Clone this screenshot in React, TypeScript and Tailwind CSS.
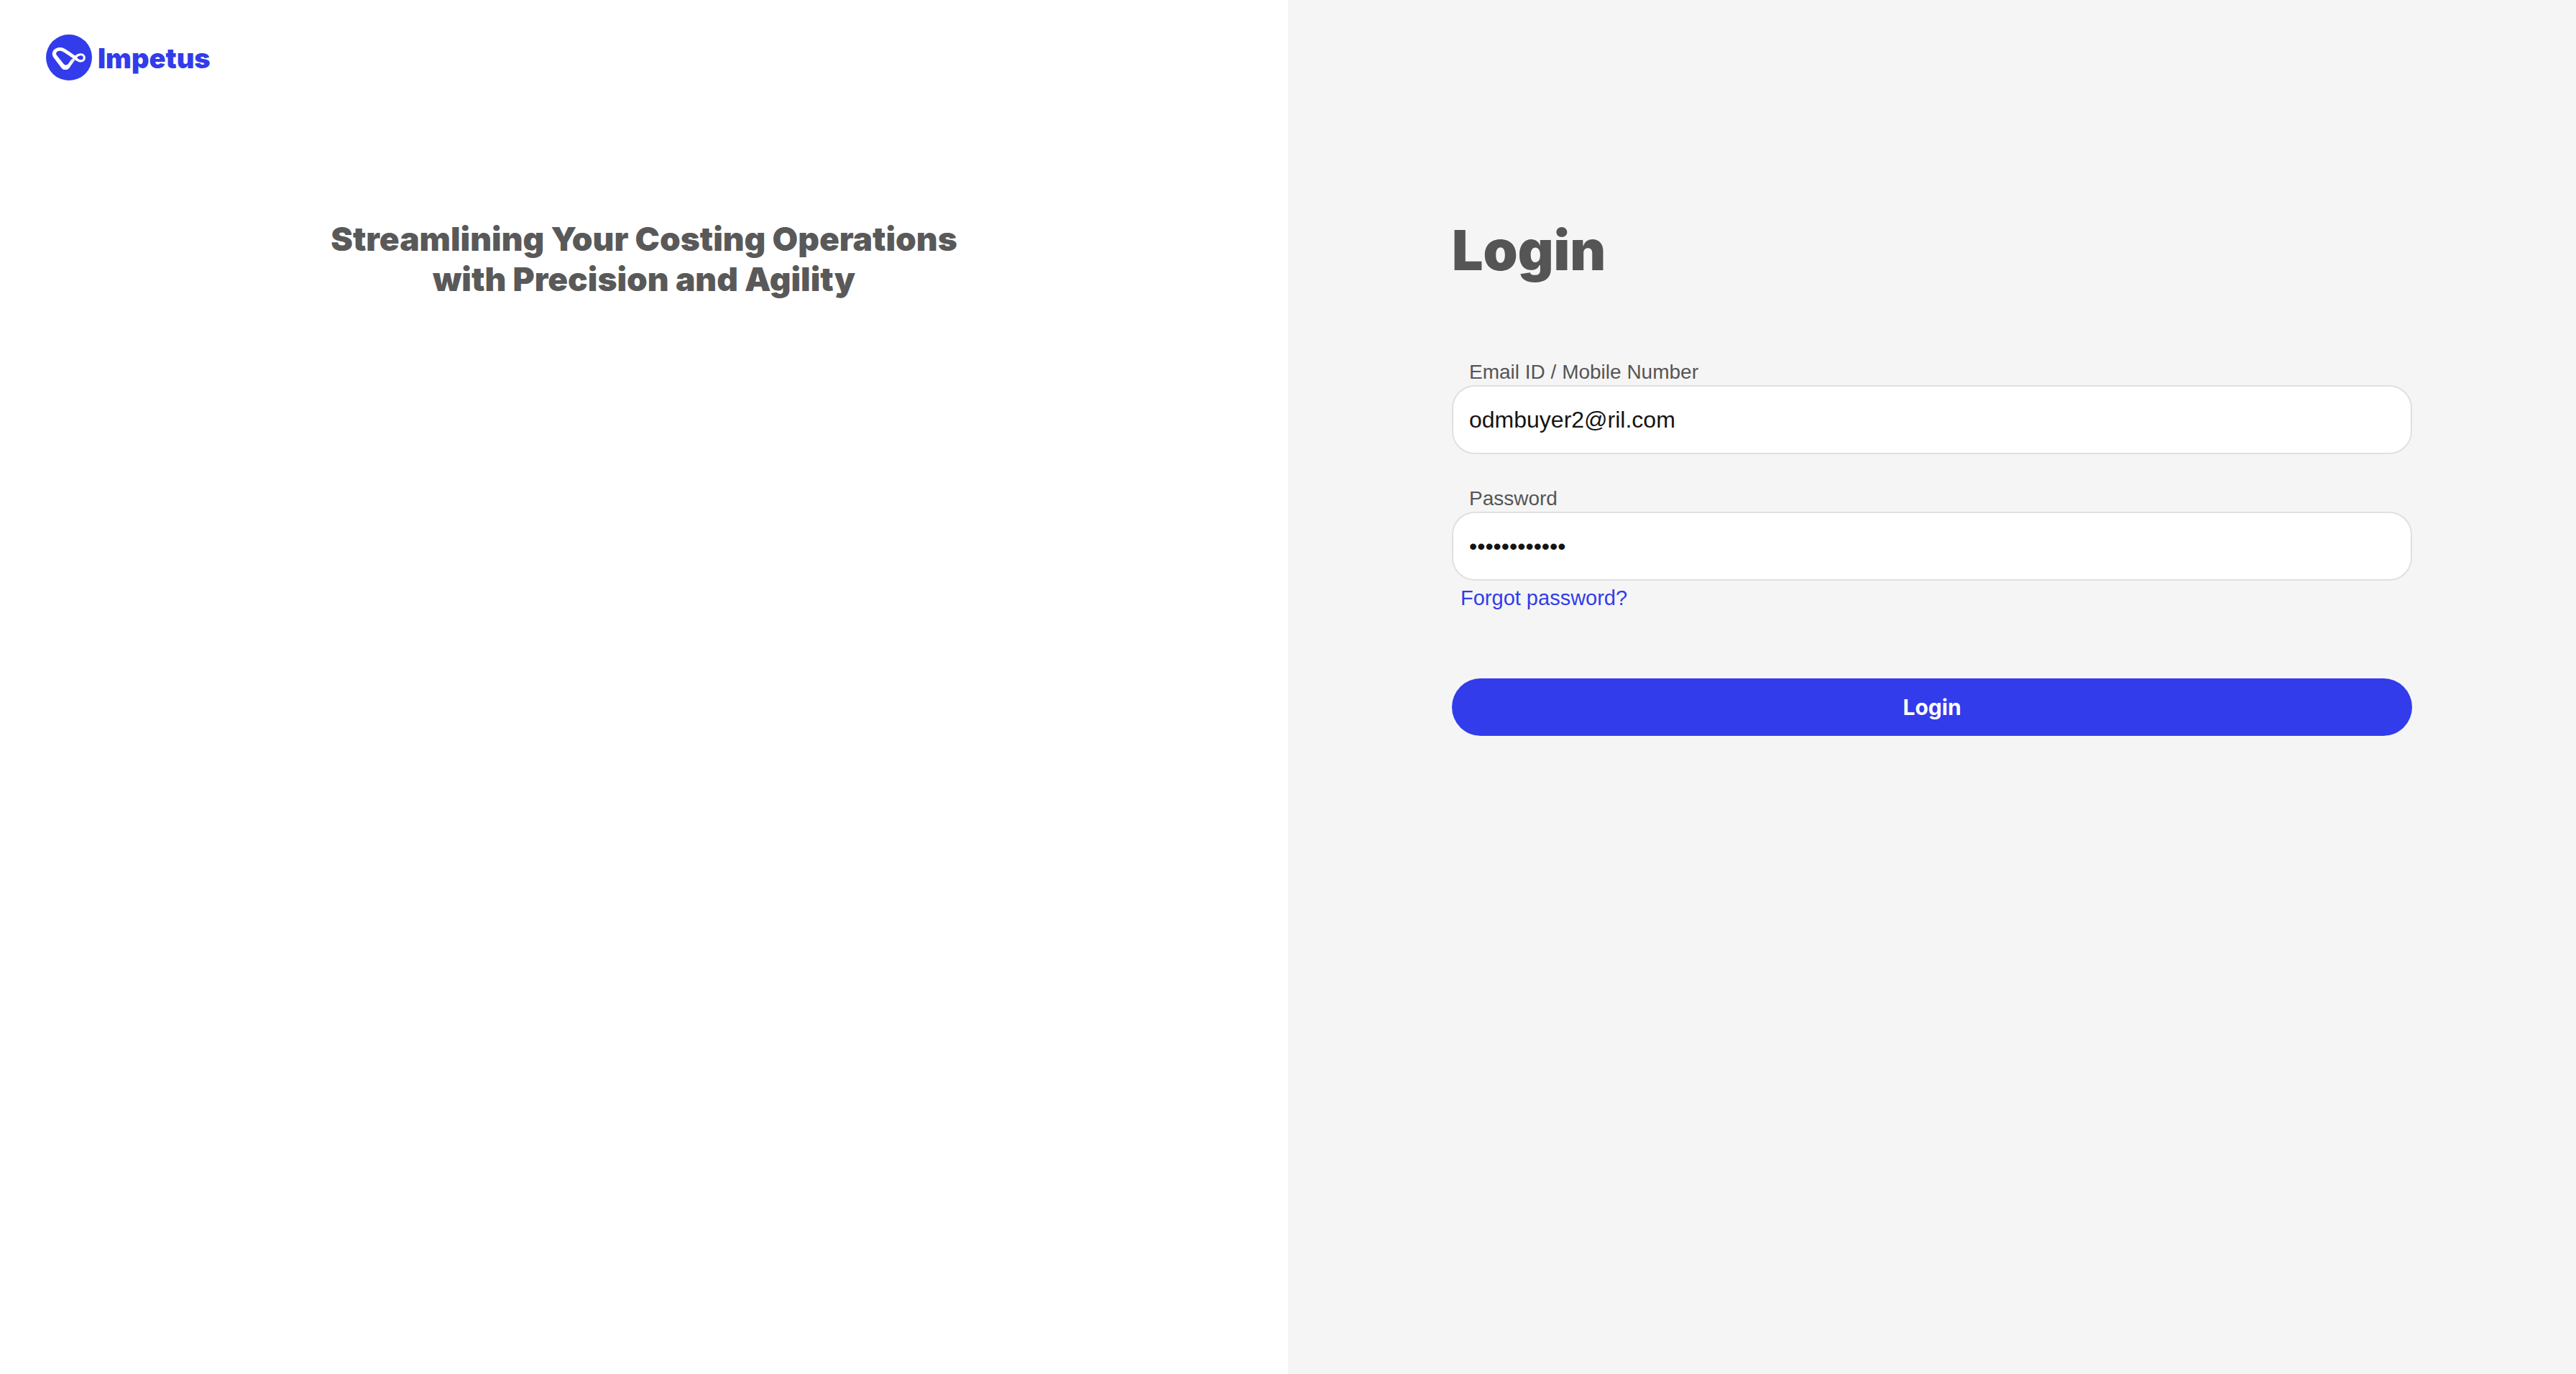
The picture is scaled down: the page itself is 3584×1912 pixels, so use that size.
import React from "react";

function LogoMark() {
  return (
    <svg viewBox="0 0 64 64" className="size-16 shrink-0" aria-hidden="true">
      <defs>
        <linearGradient id="fold" x1="40" y1="33" x2="34" y2="41" gradientUnits="userSpaceOnUse">
          <stop offset="0" stopColor="#d4d4de" />
          <stop offset="1" stopColor="#fff" />
        </linearGradient>
      </defs>
      <circle cx="32" cy="32" r="32" fill="#323CEB" />
      <path
        fill="#fff"
        fillRule="evenodd"
        d="M19.7 18 C25 18 28 21 40.5 29.5 C43 27 45.500 26.200 48.700 26.200 A6.200 6.200 0 0 1 48.700 38.600 C46 38.600 43.500 37.500 40.500 35.200 C37 39 35 43 32.500 46.500 C30.500 49.500 25 50 22 47.200 L10.500 32 C6 25.500 11 18 19.700 18 Z
           M19 22.800 C15 22.800 12.800 26 15 29 L25 41.500 C26.500 43 28.800 43 30.500 41.300 C32.500 39 34 36 37.500 33 C24 24.500 23.500 22.800 19 22.800 Z
           M43 32.300 C45 34.400 46.500 35.400 48.700 35.300 A3 3 0 0 0 48.700 29.300 C46.500 29.300 45 30 43 32.300 Z"
      />
      <path d="M37.5 33 L40.5 35.2 C38.500 37.300 37 39.500 35.500 42 L32.500 38.500 C34 36.300 35.500 34.500 37.500 33 Z" fill="url(#fold)" />
    </svg>
  );
}

function Field({ id, label, type, value }: { id: string; label: string; type: string; value: string }) {
  return (
    <div className="flex flex-col">
      <label htmlFor={id} className="pb-0.5 pl-6 text-[28px] leading-8 text-[#555]">
        {label}
      </label>
      <input
        id={id}
        type={type}
        defaultValue={value}
        className="h-24 w-full rounded-[32px] border-2 border-[#e0e0e0] bg-white px-[22px] text-[32px] text-[#141414] outline-none"
      />
    </div>
  );
}

export default function App() {
  return (
    <div className="grid min-h-screen grid-cols-2 font-['Liberation_Sans',sans-serif]">
      <section className="flex flex-col bg-white px-16 pt-12">
        <div className="flex items-center gap-2 text-[#323CEB]">
          <LogoMark />
          <span className="pt-0.5 font-['Inter',sans-serif] text-[38px] leading-[48px] font-black">Impetus</span>
        </div>
        <h2 className="mt-[192px] text-center font-['Inter',sans-serif] text-[46px] leading-[56px] font-black text-[#595959]">
          Streamlining Your Costing Operations
          <br />
          with Precision and Agility
        </h2>
      </section>
      <main className="bg-[#f5f5f5] px-[228px] pt-[302px]">
        <h1 className="font-['Inter',sans-serif] text-[77px] leading-[92px] font-black text-[#555]">Login</h1>
        <form className="flex flex-col pt-[108px]" onSubmit={(e) => e.preventDefault()}>
          <div className="flex flex-col gap-[46px]">
            <Field id="user" label="Email ID / Mobile Number" type="text" value="odmbuyer2@ril.com" />
            <Field id="password" label="Password" type="password" value="abcdefghijkl" />
          </div>
          <a href="#forgot" className="mt-2 self-start pl-3 text-[29px] leading-8 text-[#323CEB]">
            Forgot password?
          </a>
          <button
            type="submit"
            className="mt-24 h-20 w-full rounded-full bg-[#323CEB] font-['Inter',sans-serif] text-[30px] font-bold text-white"
          >
            Login
          </button>
        </form>
      </main>
    </div>
  );
}
